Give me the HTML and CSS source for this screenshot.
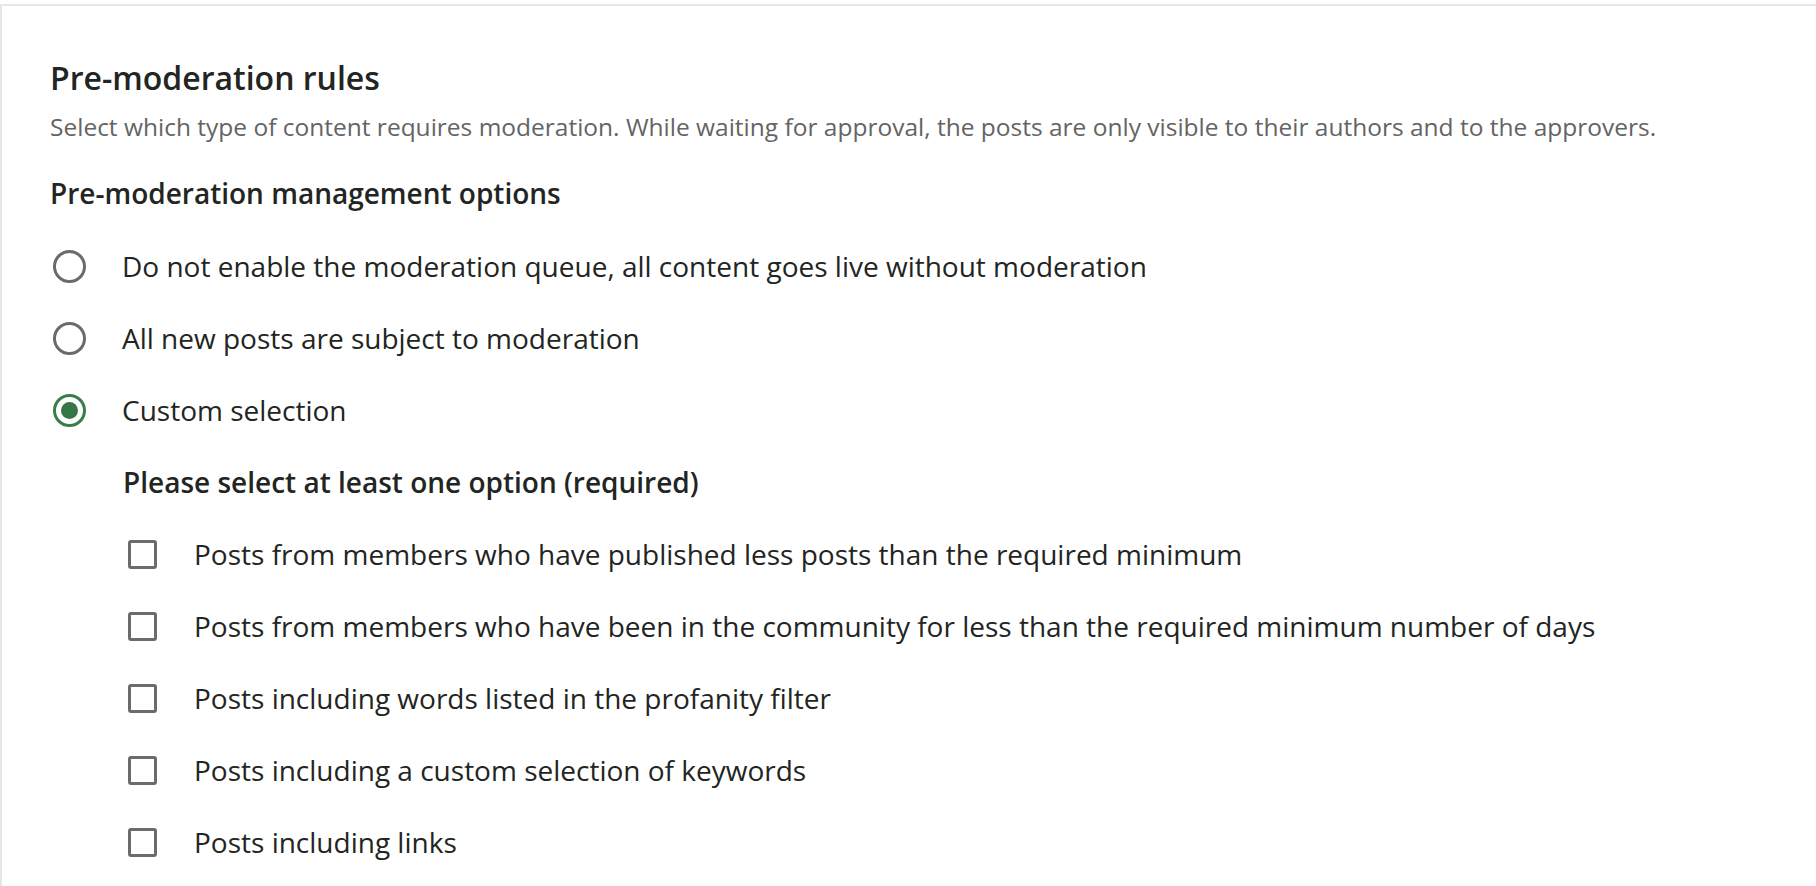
FILE: index.html
```html
<!DOCTYPE html>
<html lang="en">
<head>
<meta charset="utf-8">
<title>Pre-moderation rules</title>
<link rel="stylesheet" href="styles.css">
</head>
<body>
<div class="card">
  <h2 class="title">Pre-moderation rules</h2>
  <p class="desc">Select which type of content requires moderation. While waiting for approval, the posts are only visible to their authors and to the approvers.</p>
  <h3 class="subtitle">Pre-moderation management options</h3>
  <div class="options">
    <label class="row"><span class="radio"></span><span class="label">Do not enable the moderation queue, all content goes live without moderation</span></label>
    <label class="row"><span class="radio"></span><span class="label">All new posts are subject to moderation</span></label>
    <label class="row"><span class="radio checked"></span><span class="label">Custom selection</span></label>
    <div class="custom">
      <div class="row custom-title">Please select at least one option (required)</div>
      <label class="row"><span class="check"></span><span class="label">Posts from members who have published less posts than the required minimum</span></label>
      <label class="row"><span class="check"></span><span class="label">Posts from members who have been in the community for less than the required minimum number of days</span></label>
      <label class="row"><span class="check"></span><span class="label">Posts including words listed in the profanity filter</span></label>
      <label class="row"><span class="check"></span><span class="label">Posts including a custom selection of keywords</span></label>
      <label class="row"><span class="check"></span><span class="label">Posts including links</span></label>
    </div>
  </div>
</div>
</body>
</html>
```
FILE: styles.css
```css
html, body {
  margin: 0;
  padding: 0;
  background: #fff;
  overflow: hidden;
}
body {
  font-family: "Open Sans", "Liberation Sans", sans-serif;
  color: #222522;
}
.card {
  margin-top: 4px;
  border-top: 2px solid #e6e6e6;
  border-left: 2px solid #e6e6e6;
  padding: 50px 0 0 48px;
  height: 900px;
  box-sizing: border-box;
}
.title {
  margin: 0;
  font-size: 32px;
  font-weight: 600;
  line-height: 44px;
}
.desc {
  margin: 10px 0 0;
  font-size: 24.5px;
  line-height: 34px;
  color: #646464;
}
.subtitle {
  margin: 30px 0 0;
  font-size: 28px;
  font-weight: 600;
  line-height: 38px;
}
.options {
  margin-top: 34px;
  display: flex;
  flex-direction: column;
  gap: 32px;
}
.row {
  display: flex;
  align-items: center;
  height: 40px;
}
.label {
  font-size: 28px;
  line-height: 40px;
}
.radio {
  box-sizing: border-box;
  width: 33px;
  height: 33px;
  border: 3px solid #6b6b6b;
  border-radius: 50%;
  margin: 0 36px 0 3px;
  flex: none;
  display: flex;
  align-items: center;
  justify-content: center;
}
.radio.checked {
  border-color: #3a7d4a;
}
.radio.checked::after {
  content: "";
  width: 17px;
  height: 17px;
  border-radius: 50%;
  background: #367645;
}
.custom {
  padding-left: 73px;
  display: flex;
  flex-direction: column;
  gap: 32px;
}
.custom-title {
  font-size: 28px;
  font-weight: 600;
  line-height: 40px;
}
.check {
  box-sizing: border-box;
  width: 29px;
  height: 29px;
  border: 3px solid #6b6b6b;
  border-radius: 3px;
  margin: 0 37px 0 5px;
  flex: none;
}
```
